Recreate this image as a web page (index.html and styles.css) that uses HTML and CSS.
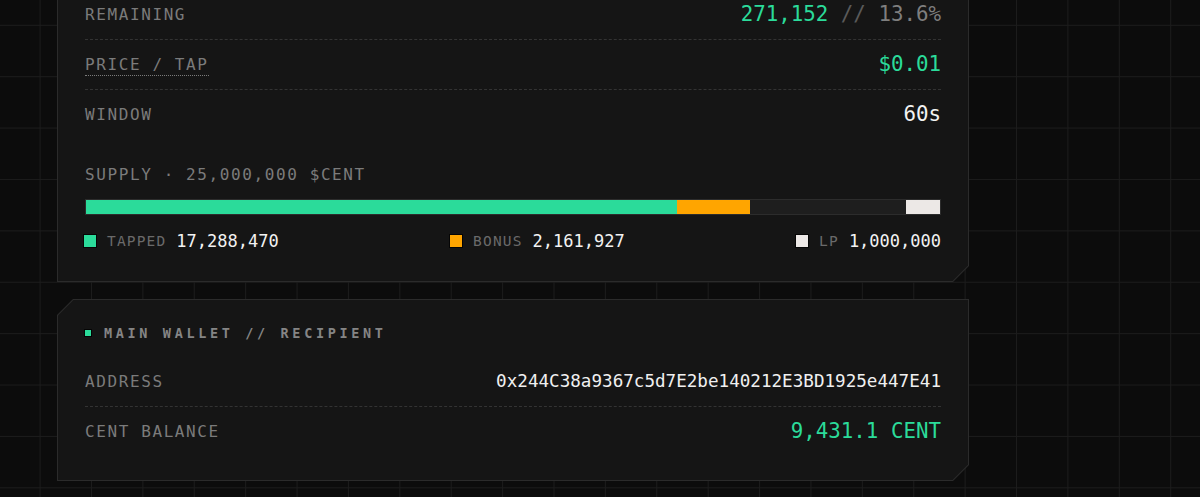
FILE: index.html
```html
<!DOCTYPE html>
<html lang="en">
<head>
  <meta charset="UTF-8">
  <meta name="viewport" content="width=device-width, initial-scale=1.0">
  <title>CENT Tap Sale</title>
  <link rel="stylesheet" href="styles.css">
</head>
<body>
  <main class="stack">

    <!-- Sale status -->
    <section class="card card-sale">
      <div class="card-body">
        <div class="rows">
          <div class="stat-row">
            <span class="stat-label">Remaining</span>
            <span class="stat-value"><span class="accent">271,152</span> <span class="slash">//</span> <span class="muted">13.6%</span></span>
          </div>
          <div class="stat-row">
            <span class="stat-label"><abbr class="hint" title="Price paid for each tap">Price / Tap</abbr></span>
            <span class="stat-value accent">$0.01</span>
          </div>
          <div class="stat-row">
            <span class="stat-label">Window</span>
            <span class="stat-value">60s</span>
          </div>
        </div>

        <div class="supply">
          <div class="supply-title">Supply · 25,000,000 $CENT</div>
          <div class="supply-bar">
            <span class="seg seg-tapped" style="width: 69.15%"></span>
            <span class="seg seg-bonus" style="width: 8.65%"></span>
            <span class="seg seg-lp" style="width: 4%"></span>
          </div>
          <ul class="legend">
            <li><i class="dot dot-tapped"></i><span class="legend-label">Tapped</span><span class="legend-value">17,288,470</span></li>
            <li><i class="dot dot-bonus"></i><span class="legend-label">Bonus</span><span class="legend-value">2,161,927</span></li>
            <li><i class="dot dot-lp"></i><span class="legend-label">LP</span><span class="legend-value">1,000,000</span></li>
          </ul>
        </div>
      </div>
    </section>

    <!-- Wallet -->
    <section class="card">
      <div class="card-body">
        <h2 class="card-title"><i class="title-dot"></i>Main Wallet // Recipient</h2>
        <div class="rows rows-spaced">
          <div class="stat-row">
            <span class="stat-label">Address</span>
            <span class="address">0x244C38a9367c5d7E2be140212E3BD1925e447E41</span>
          </div>
          <div class="stat-row">
            <span class="stat-label">Cent Balance</span>
            <span class="stat-value accent">9,431.1 CENT</span>
          </div>
        </div>
      </div>
    </section>

  </main>
</body>
</html>
```

FILE: styles.css
```css
* { box-sizing: border-box; }

body {
  margin: 0;
  font-family: "DejaVu Sans Mono", "Liberation Mono", monospace;
  color: #f0f0f0;
  background-color: #0c0c0c;
  background-image:
    linear-gradient(90deg, #1c1c1c 1px, transparent 1px),
    linear-gradient(#1c1c1c 1px, transparent 1px);
  background-size: 51.4px 51.4px;
  background-position: 39.6px 24.8px;
}

.stack {
  padding-left: 57px;
  width: 969px;
  display: flex;
  flex-direction: column;
  gap: 17px;
}

/* chamfered card: outer = border colour, inner = fill */
.card {
  padding: 1px;
  background: #2b2b2b;
  clip-path: polygon(16px 0, 100% 0, 100% calc(100% - 16px), calc(100% - 16px) 100%, 0 100%, 0 16px);
}

.card-body {
  background: #151515;
  padding: 24px 27px 24px;
  clip-path: polygon(15.4px 0, 100% 0, 100% calc(100% - 15.4px), calc(100% - 15.4px) 100%, 0 100%, 0 15.4px);
}

/* page is scrolled: top of the first card is above the fold */
.card-sale {
  margin-top: -40px;
}

.card-sale .card-body {
  padding-top: 29px;
  padding-bottom: 30px;
}

.stat-row {
  display: flex;
  justify-content: space-between;
  align-items: center;
  padding: 12px 0;
  line-height: 25px;
  border-bottom: 1px dashed #333;
}

.stat-row:last-child {
  border-bottom: none;
}

.stat-label {
  font-size: 16px;
  letter-spacing: 0.1em;
  text-transform: uppercase;
  color: #7b7b7b;
}

.hint {
  text-decoration: none;
  border-bottom: 1px dotted #7b7b7b;
  padding-bottom: 1px;
  cursor: help;
}

.stat-value {
  font-size: 20.8px;
  color: #f2f2f2;
}

.accent { color: #2bdb9a; }
.slash { color: #5a5a5a; }
.muted { color: #7e7e7e; }

.supply {
  margin-top: 26px;
}

.supply-title {
  font-size: 16px;
  line-height: 20px;
  letter-spacing: 0.1em;
  text-transform: uppercase;
  color: #7b7b7b;
}

.supply-bar {
  display: flex;
  height: 16px;
  margin-top: 14px;
  border: 1px solid #2c2c2c;
  background: #1e1e1e;
}

.seg { display: block; height: 100%; }
.seg-tapped { background: #2bdb9a; }
.seg-bonus { background: #ffa500; }
.seg-lp { background: #ece8e6; margin-left: auto; }

.legend {
  list-style: none;
  margin: 16px 0 0 -1px;
  padding: 0;
  display: flex;
  justify-content: space-between;
  line-height: 20px;
}

.legend li {
  display: flex;
  align-items: center;
}

.dot {
  width: 12px;
  height: 12px;
  margin-right: 11px;
  box-shadow: 0 0 0 1px #050505;
}

.dot-tapped { background: #2bdb9a; }
.dot-bonus { background: #ffa500; }
.dot-lp { background: #ece8e6; }

.legend-label {
  font-size: 14.5px;
  letter-spacing: 0.08em;
  text-transform: uppercase;
  color: #6a6a6a;
  margin-right: 10px;
}

.legend-value {
  font-size: 17px;
  color: #f2f2f2;
}

.card-title {
  display: flex;
  align-items: center;
  margin: 0;
  font-size: 13.5px;
  line-height: 18px;
  font-weight: bold;
  letter-spacing: 0.27em;
  text-transform: uppercase;
  color: #858585;
}

.title-dot {
  width: 6px;
  height: 6px;
  margin: 0 13px 0 0;
  background: #2bdb9a;
  box-shadow: 0 0 0 1px #050505;
}

.rows-spaced {
  margin-top: 15px;
}

.address {
  font-size: 17.6px;
  color: #f0f0f0;
}
```
